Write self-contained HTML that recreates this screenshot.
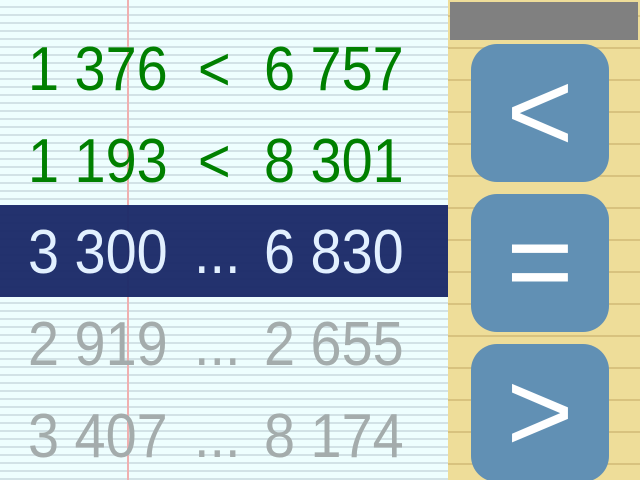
<!DOCTYPE html>
<html><head><style>
html,body{margin:0;padding:0;width:640px;height:480px;overflow:hidden;}
body{position:relative;font-family:"Liberation Sans",sans-serif;}
#left{position:absolute;left:0;top:0;width:448px;height:480px;background-color:#eefefe;
background-image:repeating-linear-gradient(to bottom,transparent 0,transparent 6px,#d2e2e6 6px,#d2e2e6 8px);}
#red{position:absolute;left:127px;top:0;width:2px;height:480px;background:#f0b0b0;}
#right{position:absolute;left:448px;top:0;width:192px;height:480px;background-color:#eedd99;
background-image:repeating-linear-gradient(to bottom,transparent 0,transparent 15px,#d8c27e 15px,#d8c27e 17px,transparent 17px,transparent 32px);}
#bar{position:absolute;left:450px;top:2px;width:188px;height:38px;background:#808080;}
.btn{position:absolute;left:471px;width:138px;height:138px;border-radius:26px;background:#6190b4;color:#fff;text-align:center;font-size:115px;line-height:136px;}
.row{position:absolute;left:0;width:448px;height:92px;}
.row span{position:absolute;top:13px;font-size:62px;line-height:70px;white-space:nowrap;transform:scaleX(0.9);transform-origin:left;}
.hl{background:#1a2a68;opacity:.96}
</style></head><body>
<div id="left"></div>
<div id="red"></div>
<div class="row hl" style="top:205px"></div>
<div id="right"></div>
<div id="bar"></div>
<div class="btn" style="top:44px">&lt;</div>
<div class="btn" style="top:194px">=</div>
<div class="btn" style="top:344px">&gt;</div>

<div class="row" style="top:22px;color:#008000"><span style="left:28px">1 376</span><span style="left:198px">&lt;</span><span style="left:264px">6 757</span></div>
<div class="row" style="top:114px;color:#008000"><span style="left:28px">1 193</span><span style="left:198px">&lt;</span><span style="left:264px">8 301</span></div>
<div class="row" style="top:205px;color:#e2f0ff"><span style="left:28px">3 300</span><span style="left:194px">...</span><span style="left:264px">6 830</span></div>
<div class="row" style="top:297px;color:#a4acac"><span style="left:28px">2 919</span><span style="left:194px">...</span><span style="left:264px">2 655</span></div>
<div class="row" style="top:389px;color:#a4acac"><span style="left:28px">3 407</span><span style="left:194px">...</span><span style="left:264px">8 174</span></div>
</body></html>
